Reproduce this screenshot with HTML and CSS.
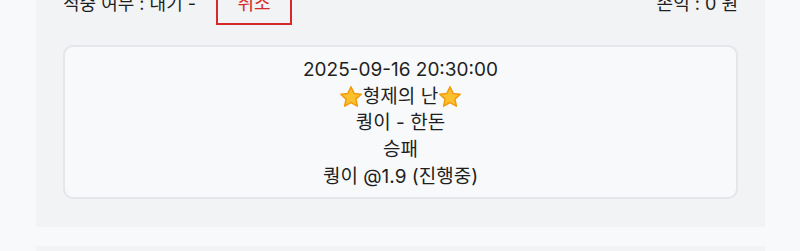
FILE: index.html
```html
<!DOCTYPE html>
<html lang="ko">
<head>
    <meta charset="UTF-8">
    <link rel="stylesheet" href="styles.css">
</head>
<body>
    <div class="bet-list">
        <div class="bet-item">
            <div class="bet-head">
                <div class="bet-status">
                    <span>적중 여부 : 대기 -</span>
                    <button class="cancel-btn">취소</button>
                </div>
                <span class="bet-profit">손익 : 0 원</span>
            </div>
            <div class="bet-card">
                <div>2025-09-16 20:30:00</div>
                <div class="bet-title">
                    <svg class="star" viewBox="0 0 24 24"><path d="M12 1.8l3.1 6.6 7.1.8-5.3 4.9 1.5 7.1L12 17.6l-6.4 3.6 1.5-7.1L1.8 9.2l7.1-.8z"/></svg>형제의 난<svg class="star" viewBox="0 0 24 24"><path d="M12 1.8l3.1 6.6 7.1.8-5.3 4.9 1.5 7.1L12 17.6l-6.4 3.6 1.5-7.1L1.8 9.2l7.1-.8z"/></svg>
                </div>
                <div>퀑이 - 한돈</div>
                <div>승패</div>
                <div>퀑이 @1.9 (진행중)</div>
            </div>
        </div>
        <div class="bet-item"></div>
    </div>
</body>
</html>
```

FILE: styles.css
```css
body {
    margin: 0;
    padding: 0;
    background: #f8f9fb;
    font-family: Inter, "Noto Sans CJK KR", sans-serif;
    color: #1f1f1f;
}

.bet-list {
    margin: -41px 35px 0 36px;
    display: flex;
    flex-direction: column;
    gap: 19px;
}

.bet-item {
    background: #f2f3f5;
    padding: 20px 27px 28px;
    min-height: 40px;
}

.bet-head {
    display: flex;
    justify-content: space-between;
    align-items: center;
    font-size: 18px;
}

.bet-status {
    display: flex;
    align-items: center;
    gap: 20px;
}

.cancel-btn {
    background: transparent;
    border: 2px solid #d42a2a;
    color: #d42a2a;
    font-family: inherit;
    font-size: 18px;
    width: 76px;
    height: 46px;
    padding: 0;
}

.bet-card {
    margin-top: 20px;
    background: #f8f9fb;
    border: 2px solid #e3e6ea;
    border-radius: 10px;
    padding: 10px 0 6px;
    text-align: center;
    font-size: 19px;
    line-height: 26.7px;
}

.bet-title {
    display: flex;
    justify-content: center;
    align-items: center;
}

.star {
    width: 24px;
    height: 24px;
    fill: #fbc02d;
    stroke: #f29b0c;
    stroke-width: 1.5;
    stroke-linejoin: round;
}
```
